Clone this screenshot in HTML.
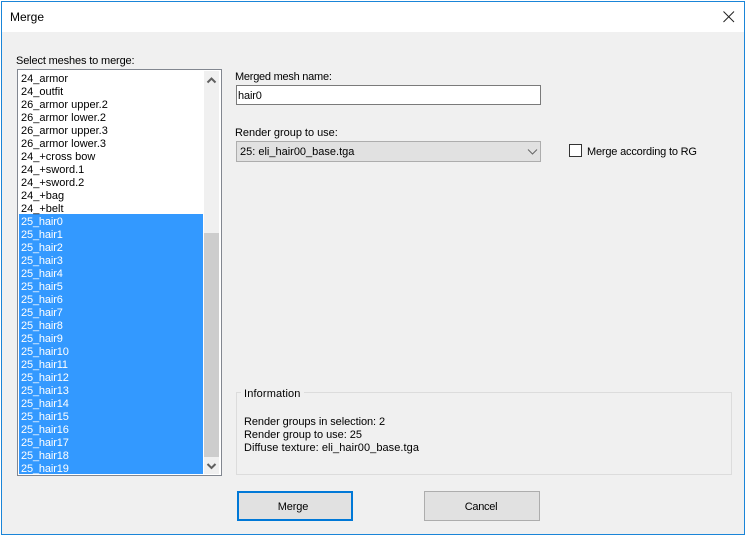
<!DOCTYPE html>
<html><head><meta charset="utf-8"><style>
html,body{margin:0;padding:0;background:#fff}
#w{position:relative;width:745px;height:535px;overflow:hidden;background:#fff;font-family:"Liberation Sans",sans-serif;font-size:11px;letter-spacing:-.14px;color:#000}
#w div{position:absolute;box-sizing:border-box}
.t{white-space:nowrap;line-height:13px;height:13px}
.i{left:21px;white-space:nowrap;line-height:13px;height:13px;margin-top:1px;letter-spacing:0}
.s{color:#fff;letter-spacing:-.14px}
</style></head><body><div id="w">
<div style="left:1px;top:1px;width:744px;height:534px;border:1px solid #1a85d8;background:#f0f0f0"></div>
<div style="left:2px;top:2px;width:742px;height:30px;background:#fff"></div>
<div class="t" style="left:10px;top:11px;font-size:12px;letter-spacing:0">Merge</div>
<svg style="position:absolute;left:723px;top:11px" width="12" height="12"><path d="M.5.5L11 11M11 .5L.5 11" stroke="#222" fill="none"/></svg>
<div class="t" style="left:16px;top:55px">Select meshes to merge:</div>
<div style="left:17px;top:69px;width:205px;height:407px;border:1px solid #828790;background:#fff"></div>
<div style="left:19px;top:214px;width:184px;height:260px;background:#3399ff"></div>
<div style="left:204px;top:71px;width:15px;height:403px;background:#f0f0f0"></div>
<div style="left:204px;top:233px;width:15px;height:224px;background:#cdcdcd"></div>
<svg style="position:absolute;left:204px;top:71px" width="15" height="403"><path d="M3.5 11.5L7.5 7.5L11.5 11.5M3.5 393L7.5 397L11.5 393" stroke="#606060" stroke-width="2" fill="none"/></svg>
<div class="i" style="top:72px">24_armor</div>
<div class="i" style="top:85px">24_outfit</div>
<div class="i" style="top:98px">26_armor upper.2</div>
<div class="i" style="top:111px">26_armor lower.2</div>
<div class="i" style="top:124px">26_armor upper.3</div>
<div class="i" style="top:137px">26_armor lower.3</div>
<div class="i" style="top:150px">24_+cross bow</div>
<div class="i" style="top:163px">24_+sword.1</div>
<div class="i" style="top:176px">24_+sword.2</div>
<div class="i" style="top:189px">24_+bag</div>
<div class="i" style="top:202px">24_+belt</div>
<div class="i s" style="top:215px">25_hair0</div>
<div class="i s" style="top:228px">25_hair1</div>
<div class="i s" style="top:241px">25_hair2</div>
<div class="i s" style="top:254px">25_hair3</div>
<div class="i s" style="top:267px">25_hair4</div>
<div class="i s" style="top:280px">25_hair5</div>
<div class="i s" style="top:293px">25_hair6</div>
<div class="i s" style="top:306px">25_hair7</div>
<div class="i s" style="top:319px">25_hair8</div>
<div class="i s" style="top:332px">25_hair9</div>
<div class="i s" style="top:345px">25_hair10</div>
<div class="i s" style="top:358px">25_hair11</div>
<div class="i s" style="top:371px">25_hair12</div>
<div class="i s" style="top:384px">25_hair13</div>
<div class="i s" style="top:397px">25_hair14</div>
<div class="i s" style="top:410px">25_hair15</div>
<div class="i s" style="top:423px">25_hair16</div>
<div class="i s" style="top:436px">25_hair17</div>
<div class="i s" style="top:449px">25_hair18</div>
<div class="i s" style="top:461px;height:13px;overflow:hidden;margin-top:0;line-height:17px">25_hair19</div>
<div class="t" style="left:235px;top:71px;letter-spacing:-.25px">Merged mesh name:</div>
<div style="left:236px;top:85px;width:305px;height:20px;border:1px solid #7a7a7a;background:#fff"></div>
<div class="t" style="left:238px;top:90px">hair0</div>
<div class="t" style="left:235px;top:127px;letter-spacing:-.03px">Render group to use:</div>
<div style="left:236px;top:141px;width:305px;height:21px;border:1px solid #adadad;background:#e1e1e1"></div>
<div class="t" style="left:240px;top:146px;letter-spacing:0">25: eli_hair00_base.tga</div>
<svg style="position:absolute;left:527px;top:148px" width="12" height="8"><path d="M1 1.5L5.5 6L10 1.5" stroke="#666" fill="none"/></svg>
<div style="left:569px;top:144px;width:13px;height:13px;border:1px solid #333;background:#fff"></div>
<div class="t" style="left:587px;top:146px;letter-spacing:-.19px">Merge according to RG</div>
<div style="left:236px;top:392px;width:496px;height:83px;border:1px solid #dcdcdc"></div>
<div class="t" style="left:241px;top:388px;background:#f0f0f0;padding:0 3px;letter-spacing:.14px">Information</div>
<div class="t" style="left:244px;top:416px;letter-spacing:-.07px">Render groups in selection: 2</div>
<div class="t" style="left:244px;top:429px;letter-spacing:-.03px">Render group to use: 25</div>
<div class="t" style="left:244px;top:442px;letter-spacing:.06px">Diffuse texture: eli_hair00_base.tga</div>
<div class="t" style="left:237px;top:491px;width:116px;height:30px;border:2px solid #0078d7;background:#e1e1e1;line-height:28px;text-align:center;padding-right:4px">Merge</div>
<div class="t" style="left:424px;top:491px;width:116px;height:30px;border:1px solid #adadad;background:#e1e1e1;line-height:30px;text-align:center;padding-right:2px;letter-spacing:-.3px">Cancel</div>
</div></body></html>
